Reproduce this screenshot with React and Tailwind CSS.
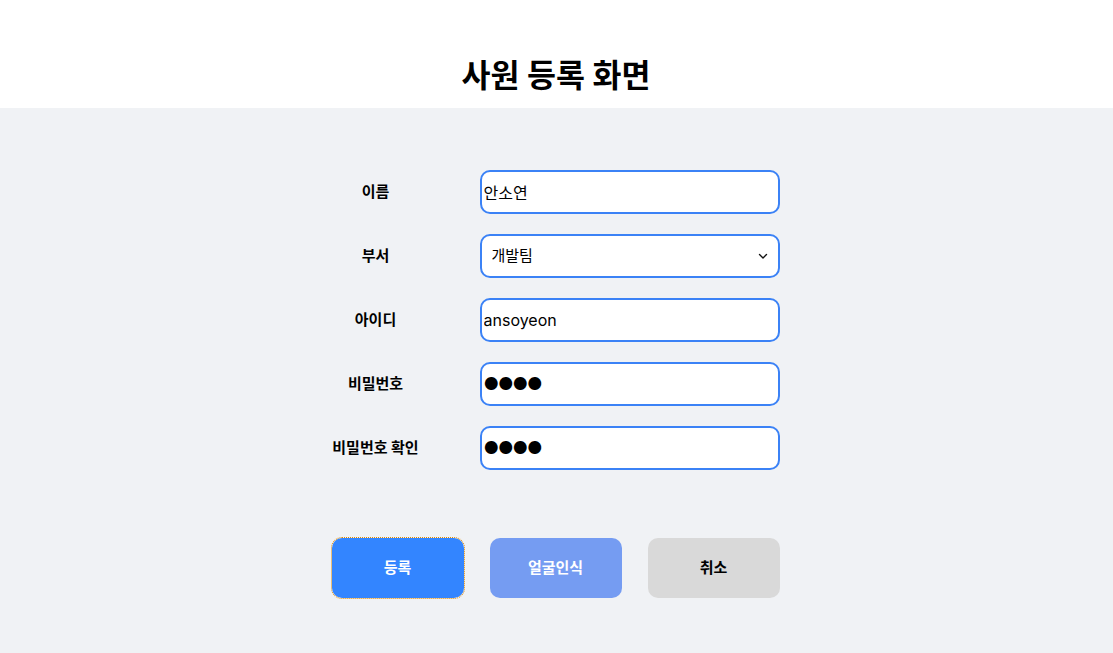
import React from 'react';

export default function App() {
    const font = { fontFamily: '"Inter", "Noto Sans CJK KR", sans-serif' };

    const rows = [
        { label: '이름', type: 'text', value: '안소연' },
        { label: '부서', type: 'select', value: '개발팀' },
        { label: '아이디', type: 'text', value: 'ansoyeon' },
        { label: '비밀번호', type: 'password', value: '●●●●' },
        { label: '비밀번호 확인', type: 'password', value: '●●●●' },
    ];

    return (
        <div className="min-h-[653px] flex flex-col bg-[#f0f2f5] text-black" style={font}>
            {/* Header */}
            <div className="h-[108px] bg-white flex items-end justify-center pb-[17px] pr-px">
                <h1 className="text-[31.5px] font-bold leading-none">사원 등록 화면</h1>
            </div>

            {/* Form */}
            <div className="flex flex-col items-center pt-[62px] pr-[2px]">
                <div className="w-[448px] flex flex-col gap-5">
                    {rows.map((row, i) => (
                        <div key={i} className="flex items-center h-[44px]">
                            <label className="w-[88px] mr-[60px] text-center text-[15px] font-bold">{row.label}</label>
                            {row.type === 'select' ? (
                                <div className="relative w-[300px] h-[44px]">
                                    <select
                                        defaultValue={row.value}
                                        className="appearance-none w-full h-full bg-white border-2 border-[#3b82f6] rounded-[10px] pl-[10px] text-[15px] outline-none"
                                    >
                                        <option>개발팀</option>
                                        <option>디자인팀</option>
                                        <option>인사팀</option>
                                    </select>
                                    <svg className="absolute right-[12px] top-[17px] pointer-events-none" width="10" height="10" viewBox="0 0 10 10" fill="none">
                                        <path d="M1.5 3.5 L5 7 L8.5 3.5" stroke="#111" strokeWidth="1.4" strokeLinecap="round" strokeLinejoin="round" />
                                    </svg>
                                </div>
                            ) : (
                                <input
                                    type="text"
                                    defaultValue={row.value}
                                    readOnly={row.type === 'password'}
                                    className={`w-[300px] h-[44px] bg-white border-2 border-[#3b82f6] rounded-[10px] px-[2px] outline-none ${row.type === 'password' ? 'text-[17px] tracking-[-1px]' : 'text-[16px]'}`}
                                />
                            )}
                        </div>
                    ))}
                </div>

                {/* Buttons */}
                <div className="w-[448px] flex justify-between mt-[68px]">
                    <button className="w-[132px] h-[60px] rounded-[10px] bg-[#3385ff] text-white text-[15px] font-bold outline-dotted outline-1 outline-[#e08a00]">
                        등록
                    </button>
                    <button className="w-[132px] h-[60px] rounded-[10px] bg-[#759cf2] text-white text-[15px] font-bold">
                        얼굴인식
                    </button>
                    <button className="w-[132px] h-[60px] rounded-[10px] bg-[#d9d9d9] text-black text-[15px] font-bold">
                        취소
                    </button>
                </div>
            </div>
        </div>
    );
}
